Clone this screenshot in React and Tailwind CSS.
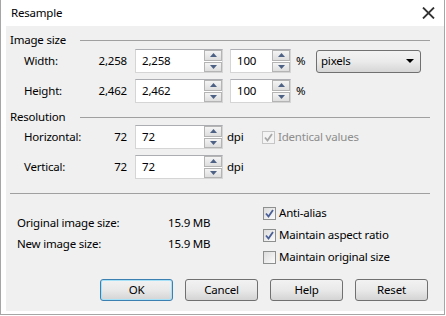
import React from "react";

const SpinArrow = ({ up }) => (
  <svg width="7" height="4" viewBox="0 0 7 4" className="block">
    {up ? (
      <path d="M0 4 L3.5 0 L7 4 Z" fill="#4d6185" />
    ) : (
      <path d="M0 0 L3.5 4 L7 0 Z" fill="#4d6185" />
    )}
  </svg>
);

function SpinBox({ value, width }) {
  return (
    <div
      className={`${width} h-[24px] flex items-stretch bg-white border border-[#d5d5d5] border-t-[#abadb3]`}
    >
      <div className="flex-1 flex items-center pl-[6px] text-black">{value}</div>
      <div className="w-[18px] flex flex-col gap-[1px]">
        <div className="flex-1 flex items-center justify-center border border-[#b4b4b4] bg-gradient-to-b from-[#f4f4f4] to-[#dedede]">
          <SpinArrow up />
        </div>
        <div className="flex-1 flex items-center justify-center border border-[#b4b4b4] bg-gradient-to-b from-[#f4f4f4] to-[#dedede]">
          <SpinArrow />
        </div>
      </div>
    </div>
  );
}

function Check({ checked, disabled }) {
  return (
    <div
      className={`w-[13px] h-[13px] border flex items-center justify-center ${
        disabled ? "border-[#c6c6c6] bg-[#f4f4f4]" : "border-[#8e8f8f] bg-gradient-to-br from-[#dcdcdc] to-[#fbfbfb]"
      }`}
    >
      {checked && (
        <svg width="9" height="9" viewBox="0 0 9 9">
          <path
            d="M1 4.5 L3.5 7.5 L8 1"
            fill="none"
            stroke={disabled ? "#a8a8a8" : "#4a5f97"}
            strokeWidth="1.8"
          />
        </svg>
      )}
    </div>
  );
}

function Button({ children, primary }) {
  return (
    <div
      className={`w-[73px] h-[22px] rounded-[3px] border flex items-center justify-center bg-gradient-to-b from-[#f2f2f2] via-[#e9e9e9] to-[#d4d4d4] ${
        primary ? "border-[#3c7fb1] shadow-[inset_0_0_0_1px_#a6e1f8]" : "border-[#707070]"
      }`}
    >
      {children}
    </div>
  );
}

function SectionHeader({ label }) {
  return (
    <div className="flex items-center h-[16px] pl-[4px] pr-[14px]">
      <span className="w-[70px]">{label}</span>
      <div className="flex-1 h-px bg-[#a0a0a0]" />
    </div>
  );
}

function Row({ label, value, children, className }) {
  return (
    <div className={`flex items-center h-[24px] ${className}`}>
      <span className="ml-[18px] w-[60px]">{label}</span>
      <span className="w-[43px] text-right">{value}</span>
      <div className="ml-[8px]">{children}</div>
    </div>
  );
}

export default function App() {
  return (
    <div className="w-[446px] h-[316px] bg-white text-[11.5px] tracking-[-0.2px] text-black font-['Noto_Sans',Arial,sans-serif] leading-[16px]">
      <div className="w-[445px] h-[315px] border-l border-r border-b border-[#a6a6a6] flex flex-col">
        {/* Barra de título */}
        <div className="h-[26px] flex items-center justify-between pl-[10px] pr-[9px]">
          <span>Resample</span>
          <svg width="13" height="12" viewBox="0 0 13 12">
            <path d="M1 0.5 L12 11.5 M12 0.5 L1 11.5" stroke="#333" strokeWidth="1.8" />
          </svg>
        </div>

        <div className="flex-1 ml-[5px] mb-[3px] bg-[#f0f0f0] flex flex-col">
          <div className="mt-[6px]">
            <SectionHeader label="Image size" />
          </div>

          <Row label="Width:" value="2,258" className="mt-[1px]">
            <div className="flex items-center">
              <SpinBox value="2,258" width="w-[88px]" />
              <div className="ml-[7px]">
                <SpinBox value="100" width="w-[61px]" />
              </div>
              <span className="ml-[5px] w-[20px]">%</span>
              <div className="w-[105px] h-[23px] rounded-[3px] border border-[#707070] bg-gradient-to-b from-[#f2f2f2] via-[#ebebeb] to-[#d6d6d6] flex items-center justify-between pl-[4px] pr-[6px]">
                <span>pixels</span>
                <svg width="8" height="4" viewBox="0 0 8 4">
                  <path d="M0 0 L8 0 L4 4 Z" fill="#000" />
                </svg>
              </div>
            </div>
          </Row>

          <Row label="Height:" value="2,462" className="mt-[6px]">
            <div className="flex items-center">
              <SpinBox value="2,462" width="w-[88px]" />
              <div className="ml-[7px]">
                <SpinBox value="100" width="w-[61px]" />
              </div>
              <span className="ml-[5px]">%</span>
            </div>
          </Row>

          <div className="mt-[6px]">
            <SectionHeader label="Resolution" />
          </div>

          <Row label="Horizontal:" value="72">
            <div className="flex items-center">
              <SpinBox value="72" width="w-[88px]" />
              <span className="ml-[4px] w-[35px]">dpi</span>
              <Check checked disabled />
              <span className="ml-[3px] text-[#8d8d8d]">Identical values</span>
            </div>
          </Row>

          <Row label="Vertical:" value="72" className="mt-[6px]">
            <div className="flex items-center">
              <SpinBox value="72" width="w-[88px]" />
              <span className="ml-[4px]">dpi</span>
            </div>
          </Row>

          <div className="mt-[14px] ml-[4px] mr-[14px] h-px bg-[#a0a0a0]" />

          {/* Información y opciones */}
          <div className="flex">
            <div className="ml-[11px] w-[246px] flex flex-col">
              <div className="mt-[21px] flex h-[16px]">
                <span className="w-[151px]">Original image size:</span>
                <span>15.9 MB</span>
              </div>
              <div className="mt-[5px] flex h-[16px]">
                <span className="w-[151px]">New image size:</span>
                <span>15.9 MB</span>
              </div>
            </div>
            <div className="flex flex-col">
              <div className="mt-[11px] flex items-center h-[16px] gap-[3px]">
                <Check checked />
                <span>Anti-alias</span>
              </div>
              <div className="mt-[6px] flex items-center h-[16px] gap-[3px]">
                <Check checked />
                <span>Maintain aspect ratio</span>
              </div>
              <div className="mt-[6px] flex items-center h-[16px] gap-[3px]">
                <Check />
                <span>Maintain original size</span>
              </div>
            </div>
          </div>

          {/* Botones */}
          <div className="mt-[14px] ml-[94px] flex gap-[12px]">
            <Button primary>OK</Button>
            <Button>Cancel</Button>
            <Button>Help</Button>
            <Button>Reset</Button>
          </div>
        </div>
      </div>
    </div>
  );
}
